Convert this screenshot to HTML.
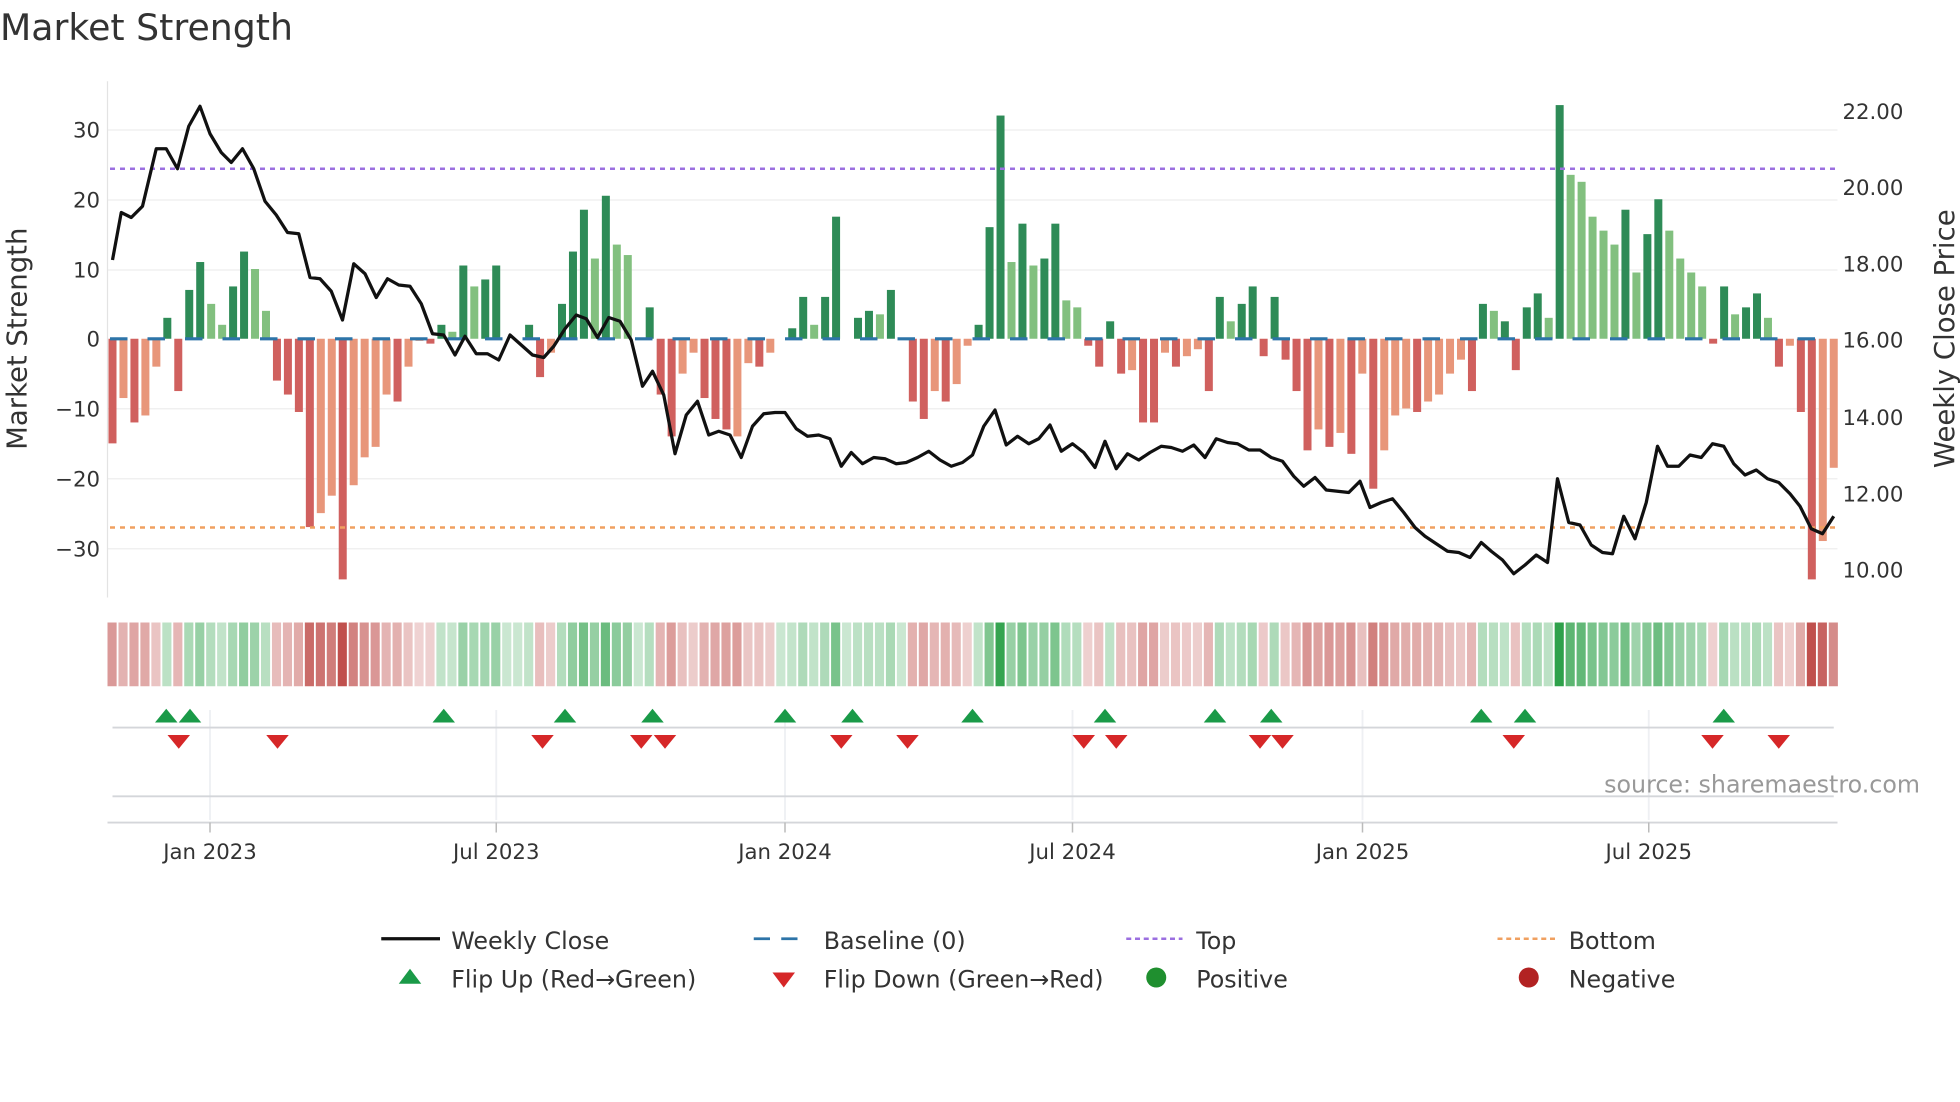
<!DOCTYPE html>
<html><head><meta charset="utf-8"><style>
html,body{margin:0;padding:0;background:#fff;}
svg{display:block;font-family:"DejaVu Sans","Liberation Sans",sans-serif;}
</style></head><body>
<svg id="s" width="1960" height="1102" viewBox="0 0 1568 881.6" xmlns="http://www.w3.org/2000/svg">
<rect width="1568" height="882" fill="#fff"/>
<text x="0" y="32" font-size="29" fill="#333">Market Strength</text>
<g stroke="#eeeeee" stroke-width="1">
<line x1="86" x2="1470" y1="104" y2="104"/><line x1="86" x2="1470" y1="160" y2="160"/><line x1="86" x2="1470" y1="216" y2="216"/><line x1="86" x2="1470" y1="327" y2="327"/><line x1="86" x2="1470" y1="383" y2="383"/><line x1="86" x2="1470" y1="439" y2="439"/>
</g>
<line x1="86" x2="86" y1="65" y2="478" stroke="#e3e3e3"/>
<g font-size="17" fill="#333" text-anchor="end">
<text x="80" y="110">30</text><text x="80" y="166">20</text><text x="80" y="222">10</text><text x="80" y="277">0</text><text x="80" y="333">−10</text><text x="80" y="389">−20</text><text x="80" y="445">−30</text>
</g>
<g font-size="17" fill="#333">
<text x="1474" y="95">22.00</text><text x="1474" y="156">20.00</text><text x="1474" y="217">18.00</text><text x="1474" y="278">16.00</text><text x="1474" y="340">14.00</text><text x="1474" y="401">12.00</text><text x="1474" y="462">10.00</text>
</g>
<text transform="translate(21,271) rotate(-90)" text-anchor="middle" font-size="22" fill="#333">Market Strength</text>
<text transform="translate(1563,271) rotate(-90)" text-anchor="middle" font-size="22" fill="#333">Weekly Close Price</text>
<g id="bars"></g>
<line x1="88" x2="1468" y1="271" y2="271" stroke="#2d74a8" stroke-width="2.5" stroke-dasharray="14,16"/>
<line x1="88" x2="1468" y1="135" y2="135" stroke="#9b6fe0" stroke-width="2" stroke-dasharray="4,4"/>
<line x1="88" x2="1468" y1="422" y2="422" stroke="#f0a060" stroke-width="2" stroke-dasharray="4,4"/>
<polyline id="price" fill="none" stroke="#111" stroke-width="2.6" stroke-linejoin="round"/>
<g id="heat"></g>
<g stroke="#eef0f3" stroke-width="1.5">
<line x1="168" x2="168" y1="568" y2="656"/><line x1="397" x2="397" y1="568" y2="656"/><line x1="628" x2="628" y1="568" y2="656"/><line x1="858" x2="858" y1="568" y2="656"/><line x1="1090" x2="1090" y1="568" y2="656"/><line x1="1319" x2="1319" y1="568" y2="656"/>
</g>
<line x1="90" x2="1467" y1="582" y2="582" stroke="#d4d6da" stroke-width="1.5"/>
<line x1="90" x2="1467" y1="637" y2="637" stroke="#d4d6da" stroke-width="1.5"/>
<line x1="86" x2="1470" y1="658" y2="658" stroke="#d4d6da" stroke-width="1.5"/>
<g id="flips"></g>
<g stroke="#bbb" stroke-width="1.2">
<line x1="168" x2="168" y1="658" y2="666"/><line x1="397" x2="397" y1="658" y2="666"/><line x1="628" x2="628" y1="658" y2="666"/><line x1="858" x2="858" y1="658" y2="666"/><line x1="1090" x2="1090" y1="658" y2="666"/><line x1="1319" x2="1319" y1="658" y2="666"/>
</g>
<g font-size="17" fill="#333" text-anchor="middle">
<text x="168" y="687">Jan 2023</text><text x="397" y="687">Jul 2023</text><text x="628" y="687">Jan 2024</text><text x="858" y="687">Jul 2024</text><text x="1090" y="687">Jan 2025</text><text x="1319" y="687">Jul 2025</text>
</g>
<text x="1536" y="634" text-anchor="end" font-size="19" fill="#999">source: sharemaestro.com</text>
<g font-size="19" fill="#333">
<line x1="305" x2="352" y1="751" y2="751" stroke="#111" stroke-width="2.6"/><text x="361" y="759">Weekly Close</text>
<line x1="603" x2="646" y1="751" y2="751" stroke="#2d74a8" stroke-width="2.2" stroke-dasharray="13,9"/><text x="659" y="759">Baseline (0)</text>
<line x1="901" x2="946" y1="751" y2="751" stroke="#9b6fe0" stroke-width="2" stroke-dasharray="4,3"/><text x="957" y="759">Top</text>
<line x1="1198" x2="1244" y1="751" y2="751" stroke="#f0a060" stroke-width="2" stroke-dasharray="4,3"/><text x="1255" y="759">Bottom</text>
<polygon points="319,787 337,787 328,775" fill="#1a9a48"/><text x="361" y="790">Flip Up (Red→Green)</text>
<polygon points="618,778 636,778 627,790" fill="#d62728"/><text x="659" y="790">Flip Down (Green→Red)</text>
<circle cx="925" cy="782" r="8" fill="#1f8f2f"/><text x="957" y="790">Positive</text>
<circle cx="1223" cy="782" r="8" fill="#b22222"/><text x="1255" y="790">Negative</text>
</g>
</svg>
<script>
var NS="http://www.w3.org/2000/svg";
var B=[[-15,1],[-8.5,0],[-12,1],[-11,0],[-4,0],[3,1],[-7.5,1],[7,1],[11,1],[5,0],[2,0],[7.5,1],[12.5,1],[10,0],[4,0],[-6,1],[-8,1],[-10.5,1],[-27,1],[-25,0],[-22.5,0],[-34.5,1],[-21,0],[-17,0],[-15.5,0],[-8,0],[-9,1],[-4,0],[-0.3,0],[-0.7,1],[2,1],[1,0],[10.5,1],[7.5,0],[8.5,1],[10.5,1],[0,0],[0,0],[2,1],[-5.5,1],[-2,0],[5,1],[12.5,1],[18.5,1],[11.5,0],[20.5,1],[13.5,0],[12,0],[0,0],[4.5,1],[-8,1],[-14,1],[-5,0],[-2,0],[-8.5,1],[-11.5,1],[-13,1],[-14,0],[-3.5,0],[-4,1],[-2,0],[0,0],[1.5,1],[6,1],[2,0],[6,1],[17.5,1],[0,0],[3,1],[4,1],[3.5,0],[7,1],[0,0],[-9,1],[-11.5,1],[-7.5,0],[-9,1],[-6.5,0],[-1,0],[2,1],[16,1],[32,1],[11,0],[16.5,1],[10.5,0],[11.5,1],[16.5,1],[5.5,0],[4.5,0],[-1,1],[-4,1],[2.5,1],[-5,1],[-4.5,0],[-12,1],[-12,1],[-2,0],[-4,1],[-2.5,0],[-1.5,0],[-7.5,1],[6,1],[2.5,0],[5,1],[7.5,1],[-2.5,1],[6,1],[-3,1],[-7.5,1],[-16,1],[-13,0],[-15.5,1],[-13.5,0],[-16.5,1],[-5,0],[-21.5,1],[-16,0],[-11,0],[-10,0],[-10.5,1],[-9,0],[-8,0],[-5,0],[-3,0],[-7.5,1],[5,1],[4,0],[2.5,1],[-4.5,1],[4.5,1],[6.5,1],[3,0],[33.5,1],[23.5,0],[22.5,0],[17.5,0],[15.5,0],[13.5,0],[18.5,1],[9.5,0],[15,1],[20,1],[15.5,0],[11.5,0],[9.5,0],[7.5,0],[-0.7,1],[7.5,1],[3.5,0],[4.5,1],[6.5,1],[3,0],[-4,1],[-1,0],[-10.5,1],[-34.5,1],[-29,0],[-18.5,0]];
var n=B.length, x0=90, dx=(1467-90)/(n-1);
var bars=document.getElementById("bars"), heat=document.getElementById("heat");
function R(g,x,y,w,h,f,o){var r=document.createElementNS(NS,"rect");r.setAttribute("x",x);r.setAttribute("y",y);r.setAttribute("width",w);r.setAttribute("height",h);r.setAttribute("fill",f);if(o!=null)r.setAttribute("fill-opacity",o);g.appendChild(r);}
for(var i=0;i<n;i++){var v=B[i][0],d=B[i][1],x=x0+dx*i;
 var h=Math.abs(v)*5.58, col=v>=0?(d?"#2e8b57":"#82c07f"):(d?"#d0605e":"#e8967a");
 if(Math.abs(v)>0.05) R(bars,x-3.2,v>=0?271-h:271,6.4,h,col);
 var a=0.25+0.75*Math.min(Math.abs(v),34)/34;
 R(heat,x-4,498,7.3,51,v>=0?"#2ca048":"#c0504d",a);
}
var P=[[90,208],[97,170],[105,174],[114,165],[125,119],[133,119],[142,135],[151,101],[160,85],[168,107],[177,122],[185,130],[194,119],[203,135],[212,161],[221,172],[230,186],[239,187],[248,222],[256,223],[265,233],[274,256],[283,211],[292,219],[301,238],[310,223],[319,228],[328,229],[337,243],[346,267],[355,268],[364,284],[372,269],[381,283],[390,283],[399,288],[408,268],[417,276],[426,284],[435,286],[443,277],[452,263],[461,252],[469,255],[478,270],[487,254],[496,257],[505,272],[514,309],[522,297],[531,316],[540,363],[549,332],[558,321],[567,348],[575,345],[584,348],[593,366],[602,341],[611,331],[620,330],[628,330],[637,343],[646,349],[655,348],[664,351],[673,373],[681,362],[690,371],[699,366],[708,367],[717,371],[725,370],[734,366],[743,361],[752,368],[761,373],[770,370],[778,364],[787,341],[796,328],[805,356],[814,349],[823,355],[831,351],[840,340],[849,361],[858,355],[867,362],[876,374],[884,353],[893,375],[902,363],[911,368],[920,362],[929,357],[937,358],[946,361],[955,356],[964,366],[973,351],[982,354],[990,355],[999,360],[1008,360],[1017,366],[1026,369],[1035,381],[1043,389],[1052,382],[1061,392],[1070,393],[1079,394],[1088,385],[1096,406],[1105,402],[1114,399],[1123,410],[1132,422],[1140,429],[1149,435],[1158,441],[1167,442],[1176,446],[1185,434],[1193,441],[1202,448],[1211,459],[1220,452],[1229,444],[1238,450],[1246,383],[1255,418],[1264,420],[1273,436],[1282,442],[1290,443],[1299,413],[1308,431],[1317,402],[1326,357],[1334,373],[1343,373],[1352,364],[1361,366],[1370,355],[1379,357],[1387,371],[1396,380],[1405,376],[1414,383],[1423,386],[1432,395],[1440,405],[1449,423],[1458,427],[1467,413]];
document.getElementById("price").setAttribute("points",P.map(function(p){return p.join(",")}).join(" "));
var fl=document.getElementById("flips");
[133,152,355,452,522,628,682,778,884,972,1017,1185,1220,1379].forEach(function(x){var p=document.createElementNS(NS,"polygon");p.setAttribute("points",(x-9)+",578 "+(x+9)+",578 "+x+",567");p.setAttribute("fill","#1a9a48");fl.appendChild(p);});
[143,222,434,513,532,673,726,867,893,1008,1026,1211,1370,1423].forEach(function(x){var p=document.createElementNS(NS,"polygon");p.setAttribute("points",(x-9)+",588 "+(x+9)+",588 "+x+",599");p.setAttribute("fill","#d62728");fl.appendChild(p);});
</script>
</body></html>
